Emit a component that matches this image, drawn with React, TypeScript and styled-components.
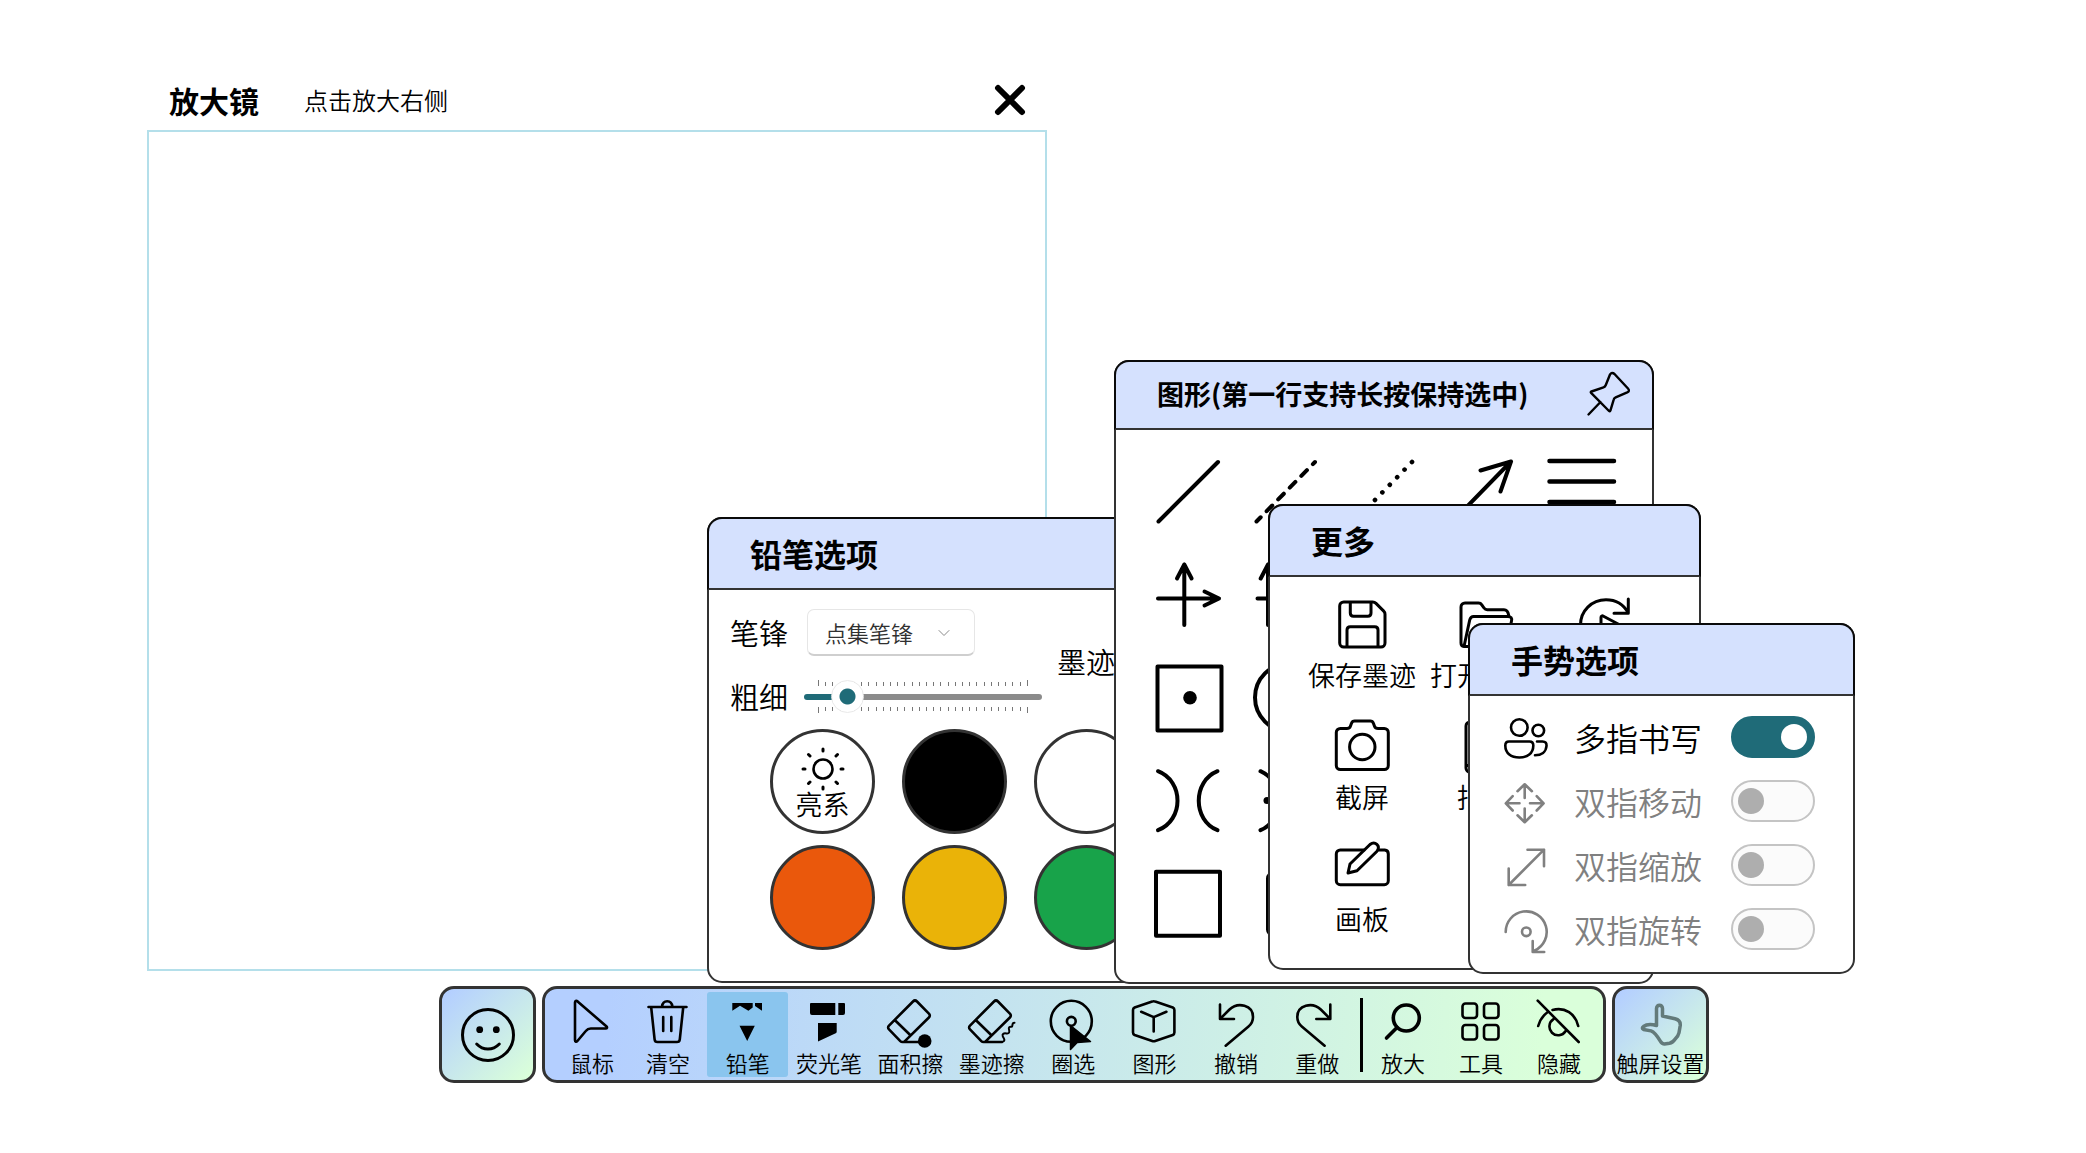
import React, { useState } from 'react';
import styled, { createGlobalStyle, css } from 'styled-components';

const ink = '#333333';
const teal = '#1f6b78';

const GlobalStyle = createGlobalStyle`
  * { box-sizing: border-box; }
  body {
    margin: 0;
    background: #ffffff;
    color: #000000;
    font-family: "Noto Sans CJK SC", "Noto Sans", sans-serif;
    font-weight: 350;
  }
  button, input, select { font: inherit; color: inherit; margin: 0; }
  button { padding: 0; border: 0; background: none; cursor: pointer; }
  svg { display: block; overflow: visible; flex: none; }
`;

const Desktop = styled.main`
  position: relative;
  min-height: 100vh;
  display: flex;
  align-items: flex-end;
  justify-content: center;
  padding: 0 0 70px 62px;
`;

/* ---------- windows ---------- */

const Magnifier = styled.section`
  position: absolute;
  left: 147px;
  top: 72px;
  width: 900px;
`;

const MagnifierHeader = styled.header`
  display: flex;
  align-items: center;
  height: 58px;
  padding: 0 20px 2px 22px;
`;

const MagnifierTitle = styled.h2`
  margin: 0 45px 0 0;
  font-size: 30px;
  line-height: 40px;
  font-weight: 700;
`;

const MagnifierHint = styled.p`
  margin: 0 auto 0 0;
  font-size: 24px;
  line-height: 40px;
`;

const Lens = styled.div`
  height: 841px;
  border: 2px solid #b4dfea;
`;

const Panel = styled.section<{ $left: number; $top: number; $width: number }>`
  position: absolute;
  left: ${(p) => p.$left}px;
  top: ${(p) => p.$top}px;
  width: ${(p) => p.$width}px;
  border: 2px solid ${ink};
  border-radius: 15px;
  background: #ffffff;
`;

const PanelHeader = styled.header<{ $compact?: boolean }>`
  display: flex;
  align-items: center;
  justify-content: space-between;
  height: ${(p) => (p.$compact ? 70 : 73)}px;
  margin: -2px -2px 0;
  padding: 0 20px 2px 41px;
  border: 2px solid #0a0a0a;
  border-bottom-color: ${ink};
  border-radius: 15px 15px 0 0;
  background: #d5e1fe;
`;

const PanelTitle = styled.h2<{ $compact?: boolean }>`
  margin: 0;
  font-size: ${(p) => (p.$compact ? 27 : 32)}px;
  line-height: 40px;
  font-weight: 700;
`;

const IconButton = styled.button`
  display: flex;
`;

/* ---------- pen options ---------- */

const PenBody = styled.div`
  padding: 19px 21px 31px;
`;

const PenControls = styled.div`
  display: flex;
  align-items: center;
  gap: 15px;
`;

const Fields = styled.div`
  display: grid;
  grid-template-columns: 60px 238px;
  column-gap: 14px;
  row-gap: 24px;
  align-items: center;
`;

const FieldLabel = styled.label`
  font-size: 29px;
  line-height: 33px;
  white-space: nowrap;
`;

const SelectBox = styled.div`
  display: grid;
  align-items: center;
  justify-self: start;
  margin-left: 3px;
  > * { grid-area: 1 / 1; }
  > svg { justify-self: end; margin-right: 25px; pointer-events: none; }
`;

const Select = styled.select`
  appearance: none;
  width: 168px;
  height: 47px;
  padding: 0 17px;
  border: 1px solid #e6e6e6;
  border-bottom: 2px solid #cfcfcf;
  border-radius: 7px;
  background: #ffffff;
  color: #303030;
  font-size: 22px;
`;

const SliderBox = styled.div`
  display: grid;
  > * { grid-area: 1 / 1; }
`;

const Ticks = styled.div`
  display: flex;
  flex-direction: column;
  justify-content: space-between;
  padding: 0 14px;
`;

const TickRow = styled.div<{ $flip?: boolean }>`
  display: flex;
  justify-content: space-between;
  align-items: ${(p) => (p.$flip ? 'flex-start' : 'flex-end')};
  height: 6px;
  span {
    width: 1px;
    height: 4px;
    background: #777777;
  }
  span:first-child, span:last-child { height: 6px; }
`;

const Range = styled.input`
  appearance: none;
  width: 100%;
  height: 33px;
  background: none;
  &::-webkit-slider-runnable-track {
    height: 6px;
    border-radius: 3px;
    background: linear-gradient(to right, ${teal} 0 18%, #8b8b8b 18%);
  }
  &::-webkit-slider-thumb {
    appearance: none;
    width: 33px;
    height: 33px;
    margin-top: -14px;
    border: 1px solid #e9e9e9;
    border-radius: 50%;
    background: radial-gradient(circle, ${teal} 0 7.5px, #ffffff 8.5px);
  }
`;

const Swatches = styled.div`
  display: grid;
  grid-template-columns: repeat(3, 105px);
  gap: 11px 27px;
  margin: 16px 0 0 40px;
`;

const Swatch = styled.button<{ $color: string }>`
  display: flex;
  flex-direction: column;
  align-items: center;
  justify-content: center;
  height: 105px;
  border: 3px solid ${ink};
  border-radius: 50%;
  background: ${(p) => p.$color};
  font-size: 27px;
  line-height: 26px;
`;

/* ---------- shapes ---------- */

const ShapeGrid = styled.div`
  display: grid;
  grid-template-columns: repeat(5, 1fr);
  grid-template-rows: repeat(5, 1fr);
  height: 552px;
  padding: 11px 23px 27px;
`;

const ShapeButton = styled.button`
  display: flex;
  align-items: center;
  justify-content: center;
`;

/* ---------- more ---------- */

const MoreGrid = styled.div`
  display: grid;
  grid-template-columns: repeat(3, 1fr);
  grid-auto-rows: 122px;
  padding: 18px 32px 7px 31px;
`;

const MoreButton = styled.button`
  display: flex;
  flex-direction: column;
  align-items: center;
  font-size: 27px;
  line-height: 40px;
  white-space: nowrap;
`;

/* ---------- gestures ---------- */

const GestureList = styled.div`
  padding: 9px 38px 11px 34px;
`;

const GestureRow = styled.label<{ $dim: boolean }>`
  display: flex;
  align-items: center;
  gap: 26px;
  height: 64px;
  font-size: 32px;
  line-height: 40px;
  color: ${(p) => (p.$dim ? '#808080' : '#000000')};
`;

const Switch = styled.input`
  appearance: none;
  display: flex;
  align-items: center;
  width: 84px;
  height: 42px;
  margin-left: auto;
  padding: 0 5px;
  border: 2px solid #c4c4c4;
  border-radius: 21px;
  background: #fbfbfb;
  &::before {
    content: "";
    width: 26px;
    height: 26px;
    border-radius: 50%;
    background: #aeaeae;
  }
  &:checked {
    justify-content: flex-end;
    padding-right: 6px;
    border-color: ${teal};
    background: ${teal};
  }
  &:checked::before { background: #ffffff; }
`;

/* ---------- toolbar ---------- */

const Toolbar = styled.nav`
  display: flex;
  gap: 6px;
`;

const frame = css`
  height: 97px;
  border: 3px solid ${ink};
  border-radius: 15px;
`;

const TileButton = styled.button<{ $labelled?: boolean }>`
  ${frame}
  display: flex;
  flex-direction: column;
  align-items: center;
  justify-content: ${(p) => (p.$labelled ? 'flex-start' : 'center')};
  width: 97px;
  padding-top: ${(p) => (p.$labelled ? 9 : 0)}px;
  background: linear-gradient(135deg, #b4cfff 5%, #daffda 95%);
  font-size: 22px;
  line-height: 32px;
  white-space: nowrap;
`;

const Bar = styled.div`
  ${frame}
  display: flex;
  align-items: center;
  padding: 0 5px 0 10px;
  background: linear-gradient(94deg, #b4cfff 6%, #daffda 94%);
`;

const DrawTools = styled.div`
  display: flex;
  width: 651px;
`;

const Tool = styled.button<{ $width?: number; $active?: boolean }>`
  display: flex;
  flex-direction: column;
  align-items: center;
  ${(p) => (p.$width ? `width: ${p.$width}px;` : 'flex: 1;')}
  height: 85px;
  padding-top: 6px;
  border-radius: 3px;
  background: ${(p) => (p.$active ? '#8ac5ee' : 'transparent')};
  font-size: 22px;
  line-height: 32px;
  white-space: nowrap;
`;

const Divider = styled.span`
  width: 3px;
  height: 74px;
  margin: 0 1px 0 2px;
  background: #000000;
`;

/* ---------- drawings ---------- */

type DrawingProps = { size: number; weight?: number; children: React.ReactNode };

const Drawing = ({ size, weight = 3, children }: DrawingProps) => (
  <svg
    width={size}
    height={size}
    viewBox={`0 0 ${size} ${size}`}
    fill="none"
    stroke="currentColor"
    strokeWidth={weight}
    strokeLinecap="round"
    strokeLinejoin="round"
    aria-hidden="true"
  >
    {children}
  </svg>
);

const solid = { fill: 'currentColor', stroke: 'none' };

const toolIcons: Record<string, React.ReactNode> = {
  mouse: <path d="M7 4.6v37.6c0 1.8 1.3 2.1 2.4.8l8.4-10c1.4-1.8 2.8-2.5 5-2.5h14.7c1.7 0 2-1.1.8-2.2L9.6 3.4C8.3 2.4 7 3 7 4.6z" />,
  trash: <path d="M4.5 9h38M7.2 9.5l3.4 31.8c.2 1.8 1.2 2.7 2.9 2.7h19.4c1.7 0 2.7-.9 2.9-2.7L39.2 9.5M18 8.6c.4-3.6 2.3-5.4 5.2-5.4s4.8 1.8 5.2 5.4M19.2 19v14M27.3 19v14" />,
  pencil: (
    <g {...solid}>
      <path d="M8.3 5h20.4v4.4l-4.3 3.3-8.4-4.9-7.7 4.9zM31 5h7v7.7L31 8zM15.5 27.7h15.3L23.2 43z" />
    </g>
  ),
  highlighter: (
    <g {...solid}>
      <path d="M6 5h24.3v12H7a2 2 0 0 1-2-2V6a1 1 0 0 1 1-1zM33.3 5H39a1 1 0 0 1 1 1v9a2 2 0 0 1-2 2h-4.7zM13 25h18.7v8.5c0 1-.3 1.4-1 1.7L13 43.5z" />
    </g>
  ),
  areaEraser: (
    <>
      <path d="M27 3.5 3 27.6c-1.2 1.2-1.2 2.6 0 3.8l11.3 11.7c1.2 1.2 3.4 1.2 4.6 0l24-23.6c1.2-1.2 1.2-2.6 0-3.8L31 3.5c-1.2-1.2-2.8-1.2-4 0zM9 22.3l14.7 14.2M17.3 44h18" />
      <circle cx="38.7" cy="43" r="6.8" {...solid} />
    </>
  ),
  inkEraser: (
    <>
      <path d="M26 3.5 2 27.6c-1.2 1.2-1.2 2.6 0 3.8l11.3 11.7c1.2 1.2 3.4 1.2 4.6 0l24-23.6c1.2-1.2 1.2-2.6 0-3.8L30 3.5c-1.2-1.2-2.8-1.2-4 0zM8 22.3l14.7 14.2M16.3 44H34" />
      <path strokeWidth="2" d="M34 44c4-1 2-3.5.8-5.5-1-2.5 1-3.5 3.5-3 3 .5 3.5-1.5 2.7-4-.7-2.3.5-3 2.5-2.8 2 0-.5-4 3-4" />
    </>
  ),
  lasso: (
    <>
      <circle cx="22.3" cy="23.3" r="20.5" />
      <circle cx="22.3" cy="23.3" r="4.4" />
      <path d="M21.5 27.5v24l6.7-7 13.3-1z" fill="currentColor" strokeWidth="1.5" />
    </>
  ),
  cube: <path d="M21.2 3.6 3.6 9.5C2.6 10 2 10.7 2 12v22.5c0 1.3.6 2 1.6 2.5l17.6 6c1 .4 2 .4 3 0l17.6-6c1-.5 1.6-1.2 1.6-2.5V12c0-1.3-.6-2-1.6-2.5L24.2 3.6c-1-.4-2-.4-3 0zM10.2 13.8l12.5 5.3 12.7-5.3M22.7 19.5v14" />,
  undo: <path d="M8 6.5V21h14M8.6 20.4 17.5 11.5C26 3.5 41 7 41 19c0 4-1.5 7-4.5 9.5L13.7 47.7" />,
  redo: <path d="M37.3 6.5V21h-14M36.7 20.4 27.8 11.5C19.3 3.5 4.3 7 4.3 19c0 4 1.5 7 4.5 9.5l22.8 19.2" />,
  zoom: (
    <g strokeWidth="3.6">
      <circle cx="27.3" cy="20" r="13" />
      <path d="M18 29.5 7.5 40" />
    </g>
  ),
  grid: (
    <>
      {[5.5, 27].map((y) =>
        [5.5, 27].map((x) => <rect key={`${x}-${y}`} x={x} y={y} width="14.5" height="14.5" rx="3" />),
      )}
    </>
  ),
  hide: <path d="M2.7 2.7 43.7 44M3.2 28C4.8 22 8 17.5 12.5 14.3M17.5 12C30 8.5 40.5 16 43.2 28M18.5 21.2a8.7 8.7 0 1 0 12 12" />,
};

const Hand = () => (
  <Drawing size={48} weight={3.5}>
    <path
      stroke="#637a7a"
      d="M19.5 27.5V10.5c0-4.5 6-4.5 6 0v7.5l12.5 2.7c4 1 5.7 3.2 5.2 7l-1.2 7c-.5 3-2 4.5-4 6.5-2 3-3 3.5-5.5 4l-5 .7c-2 0-3-.7-4-2.5-3-5-5.5-9-9.5-10.5L6.5 31.5c-1.5-.7-1.5-2 0-3 4-3 8.5-2.2 13-1z"
    />
  </Drawing>
);

const shapes: { name: string; art: React.ReactNode }[] = [
  { name: '直线', art: <path d="M6.5 65.5 66 6" /> },
  { name: '虚线', art: <path d="M65 6 6.5 65.5" strokeDasharray="8 8.5" strokeDashoffset="5" /> },
  { name: '点线', art: <path d="M64 6 6 65.5" strokeWidth="4.6" strokeDasharray="0.1 10.5" /> },
  { name: '箭头', art: <path d="M6 66 65 5.5M34.5 14.5 65 5.5l-10.5 30" /> },
  { name: '平行线', art: <path strokeWidth="4.5" d="M5.5 5h64.5M5.5 25.5h64.5M5.5 46h64.5M5.5 66.5h64.5" /> },
  { name: '平面坐标', art: <path d="M32.3 66V5.5M25 19.5l7.3-14 7.3 14M6 39.5h61M52.5 32.5l14.5 7-14.5 7" /> },
  { name: '三轴坐标', art: <path d="M18 66V5.5M10.7 19.5l7.3-14 7.3 14M7.5 39.5H67" /> },
  { name: '', art: null },
  { name: '', art: null },
  { name: '', art: null },
  { name: '中心矩形', art: <><rect x="5.5" y="4.5" width="64" height="64" /><circle cx="38" cy="35.7" r="6.8" {...solid} /></> },
  { name: '圆', art: <circle cx="39" cy="35.5" r="34" /> },
  { name: '', art: null },
  { name: '', art: null },
  { name: '', art: null },
  { name: '双曲线', art: <path d="M6 6.2c26 10 26 49 0 59M65.500 6.200c-25 10-25 49 0 59" /> },
  { name: '带焦点双曲线', art: <><path d="M10.500 6.200c24 10 24 49 0 59" /><circle cx="17" cy="35.500" r="3.500" {...solid} /></> },
  { name: '', art: null },
  { name: '', art: null },
  { name: '', art: null },
  { name: '矩形', art: <rect x="4" y="3.800" width="64" height="64" /> },
  { name: '圆柱', art: <rect x="18" y="5.500" width="42" height="61" rx="5" /> },
];

const moreItems: { label: string; hideLabel?: boolean; art: React.ReactNode }[] = [
  {
    label: '保存墨迹',
    art: <path d="M11.700 7h29c1.500 0 2.300.4 3.300 1.400l7.500 7.500c1 1 1.500 1.800 1.500 3.300V48a4 4 0 0 1-4 4H11.700a4 4 0 0 1-4-4V11a4 4 0 0 1 4-4zM18.300 7.500V18c0 2 1.200 3.300 3.200 3.300h14.300c2 0 3.200-1.300 3.200-3.300V7.500M15 51.500V35c0-2 1.300-3.300 3.300-3.300h24.400c2 0 3.300 1.300 3.300 3.300v16.500" />,
  },
  {
    label: '打开墨迹',
    art: <path d="M10 51.500c-2-.3-3-1.500-3-3.500V12a4 4 0 0 1 4-4h13.500c1.500 0 2.500.6 3.300 1.800L30 13c.8 1.200 1.800 1.800 3.300 1.800H50c2.500 0 4 1.500 4.700 5.500M10 51.500 15.700 25c.5-2.200 1.800-3.500 4-3.500H54c3 0 4.200 1.500 3.500 4.500L53 48c-.5 2.300-1.800 3.500-4 3.500z" />,
  },
  {
    label: '墨迹回放',
    hideLabel: true,
    art: <path d="M52.300 4v14.300H38M52.300 18C47 8.500 39 4.800 30 4.800 15.500 4.800 4.500 16 4.500 30S15.500 55.500 30 55.500 55.500 44.500 55.500 30M25 41V22.500c0-1.500 1.200-2 2.500-1.300L44 30" />,
  },
  {
    label: '截屏',
    art: (
      <>
        <path d="M8.300 11.500h6.500c2 0 3-.6 3.600-2.300l1-2.800c.6-1.700 1.600-2.400 3.300-2.400h15.500c1.700 0 2.700.7 3.300 2.400l1 2.800c.6 1.700 1.600 2.300 3.600 2.300h6.200a4 4 0 0 1 4 4v33a4 4 0 0 1-4 4h-44a4 4 0 0 1-4-4v-33a4 4 0 0 1 4-4z" />
        <circle cx="30.300" cy="30" r="12.700" />
      </>
    ),
  },
  {
    label: '指针',
    art: <path d="M16 5h28a4 4 0 0 1 4 4v42a4 4 0 0 1-4 4H16a4 4 0 0 1-4-4V9a4 4 0 0 1 4-4zM12 48.500h36" />,
  },
  { label: '', art: null },
  {
    label: '画板',
    art: (
      <>
        <path d="M32 11H8.300a4 4 0 0 0-4 4v26.700a4 4 0 0 0 4 4h44a4 4 0 0 0 4-4V15c0-2.300-1.300-3.800-3.600-4H47" />
        <path d="m16 34 2-9L38 5.500c5-4 11 1.500 7 6.700L25 31.800z" />
      </>
    ),
  },
];

const gestures: { label: string; art: React.ReactNode }[] = [
  {
    label: '多指书写',
    art: (
      <>
        <circle cx="15.300" cy="12.500" r="8.300" />
        <circle cx="34.300" cy="15.500" r="5.800" />
        <path d="M5 26.500h20.500c2.500 0 3.800 1.300 3.800 4 0 8-6 12-14 12s-14-4-14-12c0-2.700 1.200-4 3.700-4zM33 26.500h5.500c3 0 4.200 1.500 4 4.500-.5 6-5 9.300-11.500 9.300" />
      </>
    ),
  },
  {
    label: '双指移动',
    art: <path d="M20.700 19V5.500M13.500 12.200l7.200-6.900 7.200 6.900M20.700 29.500V43M13.500 36.300l7.200 6.900 7.200-6.900M15.500 24.300H2M8.700 17.100l-6.900 7.200 6.900 7.200M26 24.300h13.500M32.700 17.100l6.900 7.200-6.900 7.200" />,
  },
  {
    label: '双指缩放',
    art: <path d="M4.700 42 40 6.700M23.500 6.700H40v16.500M4.700 25.500V42h16.500" />,
  },
  {
    label: '双指旋转',
    art: (
      <>
        <circle cx="22.300" cy="24.800" r="4.300" />
        <path d="M1.700 25a20.500 20.500 0 1 1 29 18.500M28.700 34v11h11.500" />
      </>
    ),
  },
];

const swatches = ['#ffffff', '#000000', '#ffffff', '#ea580c', '#eab308', '#18a34a'];

const drawTools = [
  { icon: 'pencil', label: '铅笔' },
  { icon: 'highlighter', label: '荧光笔' },
  { icon: 'areaEraser', label: '面积擦' },
  { icon: 'inkEraser', label: '墨迹擦' },
  { icon: 'lasso', label: '圈选' },
  { icon: 'cube', label: '图形' },
  { icon: 'undo', label: '撤销' },
  { icon: 'redo', label: '重做' },
];

const sideTools = [
  { icon: 'zoom', label: '放大' },
  { icon: 'grid', label: '工具' },
  { icon: 'hide', label: '隐藏' },
];

const ticks = Array.from({ length: 30 }, (_, i) => <span key={i} />);

const ToolIcon = ({ name }: { name: string }) => (
  <Drawing size={48} weight={2.6}>
    {toolIcons[name]}
  </Drawing>
);

const MagnifierWindow = () => (
  <Magnifier>
    <MagnifierHeader>
      <MagnifierTitle>放大镜</MagnifierTitle>
      <MagnifierHint>点击放大右侧</MagnifierHint>
      <IconButton aria-label="关闭">
        <Drawing size={34} weight={6}>
          <path d="m5 5 24 24M29 5 5 29" />
        </Drawing>
      </IconButton>
    </MagnifierHeader>
    <Lens />
  </Magnifier>
);

const PenPanel = () => {
  const [width, setWidth] = useState(13);
  return (
    <Panel $left={707} $top={517} $width={623}>
      <PanelHeader>
        <PanelTitle>铅笔选项</PanelTitle>
      </PanelHeader>
      <PenBody>
        <PenControls>
          <Fields>
            <FieldLabel htmlFor="tip">笔锋</FieldLabel>
            <SelectBox>
              <Select id="tip" defaultValue="点集笔锋">
                <option>点集笔锋</option>
              </Select>
              <svg width="12" height="8" viewBox="0 0 12 8" fill="none" stroke="#8a8a8a" strokeLinecap="round">
                <path d="m1 1.500 5 5 5-5" />
              </svg>
            </SelectBox>
            <FieldLabel htmlFor="size">粗细</FieldLabel>
            <SliderBox>
              <Ticks aria-hidden="true">
                <TickRow>{ticks}</TickRow>
                <TickRow $flip>{ticks}</TickRow>
              </Ticks>
              <Range
                id="size"
                type="range"
                min={0}
                max={100}
                value={width}
                onChange={(e) => setWidth(Number(e.target.value))}
              />
            </SliderBox>
          </Fields>
          <FieldLabel as="span">墨迹</FieldLabel>
        </PenControls>
        <Swatches>
          {swatches.map((color, i) => (
            <Swatch key={i} $color={color} aria-label={i === 0 ? '亮系' : color}>
              {i === 0 && (
                <>
                  <Drawing size={44}>
                    <circle cx="22" cy="22" r="9.500" strokeWidth="2.600" />
                    <path d="M22 4v-2M22 40v2M4 22H2M40 22h2M9 9 7.500 7.500M35 9l1.500-1.500M9 35l-1.500 1.500M35 35l1.500 1.500" />
                  </Drawing>
                  亮系
                </>
              )}
            </Swatch>
          ))}
        </Swatches>
      </PenBody>
    </Panel>
  );
};

const ShapePanel = () => (
  <Panel $left={1114} $top={360} $width={540}>
    <PanelHeader $compact>
      <PanelTitle $compact>图形(第一行支持长按保持选中)</PanelTitle>
      <IconButton aria-label="固定">
        <Drawing size={46} weight={2.4}>
          <path d="M24 3.5 19.8 14c-.5 1.300-1 1.900-2.300 2.300L5.500 20.500c-.8.3-1 .8-.4 1.400L23 40c.6.600 1.200.500 1.400-.4l3.300-11c.3-1.200.9-1.700 2-2.200l11.500-5c2-1 2.300-2.300.8-3.900L28.500 3c-1.700-1.500-3.500-1.500-4.500.5zM14.500 31 2.500 43.500" />
        </Drawing>
      </IconButton>
    </PanelHeader>
    <ShapeGrid>
      {shapes.map((shape, i) =>
        shape.art ? (
          <ShapeButton key={i} aria-label={shape.name}>
            <Drawing size={72} weight={4}>
              {shape.art}
            </Drawing>
          </ShapeButton>
        ) : (
          <span key={i} />
        ),
      )}
    </ShapeGrid>
  </Panel>
);

const MorePanel = () => (
  <Panel $left={1268} $top={504} $width={433}>
    <PanelHeader>
      <PanelTitle>更多</PanelTitle>
    </PanelHeader>
    <MoreGrid>
      {moreItems.map((item, i) =>
        item.art ? (
          <MoreButton key={i} aria-label={item.label}>
            <Drawing size={60}>{item.art}</Drawing>
            {!item.hideLabel && item.label}
          </MoreButton>
        ) : (
          <span key={i} />
        ),
      )}
    </MoreGrid>
  </Panel>
);

const GesturePanel = () => {
  const [on, setOn] = useState([true, false, false, false]);
  const toggle = (index: number) => setOn(on.map((v, i) => (i === index ? !v : v)));
  return (
    <Panel $left={1468} $top={623} $width={387}>
      <PanelHeader>
        <PanelTitle>手势选项</PanelTitle>
      </PanelHeader>
      <GestureList>
        {gestures.map((gesture, i) => (
          <GestureRow key={gesture.label} $dim={i > 0}>
            <Drawing size={44} weight={2.6}>
              {gesture.art}
            </Drawing>
            <span>{gesture.label}</span>
            <Switch type="checkbox" role="switch" checked={on[i]} onChange={() => toggle(i)} />
          </GestureRow>
        ))}
      </GestureList>
    </Panel>
  );
};

const MainToolbar = () => (
  <Toolbar aria-label="批注工具">
    <TileButton aria-label="表情">
      <Drawing size={56}>
        <circle cx="28" cy="28" r="25.5" />
        <circle cx="19.7" cy="22.7" r="3.4" {...solid} />
        <circle cx="36.3" cy="22.7" r="3.4" {...solid} />
        <path d="M16.7 37c6.5 6.8 16 6.8 22.6 0" />
      </Drawing>
    </TileButton>
    <Bar>
      <Tool $width={74}>
        <ToolIcon name="mouse" />
        鼠标
      </Tool>
      <Tool $width={78}>
        <ToolIcon name="trash" />
        清空
      </Tool>
      <DrawTools>
        {drawTools.map((tool) => (
          <Tool key={tool.icon} $active={tool.icon === 'pencil'}>
            <ToolIcon name={tool.icon} />
            {tool.label}
          </Tool>
        ))}
      </DrawTools>
      <Divider />
      {sideTools.map((tool) => (
        <Tool key={tool.icon} $width={78}>
          <ToolIcon name={tool.icon} />
          {tool.label}
        </Tool>
      ))}
    </Bar>
    <TileButton $labelled>
      <Hand />
      触屏设置
    </TileButton>
  </Toolbar>
);

export default function App() {
  return (
    <>
      <GlobalStyle />
      <Desktop>
        <MagnifierWindow />
        <PenPanel />
        <ShapePanel />
        <MorePanel />
        <GesturePanel />
        <MainToolbar />
      </Desktop>
    </>
  );
}
